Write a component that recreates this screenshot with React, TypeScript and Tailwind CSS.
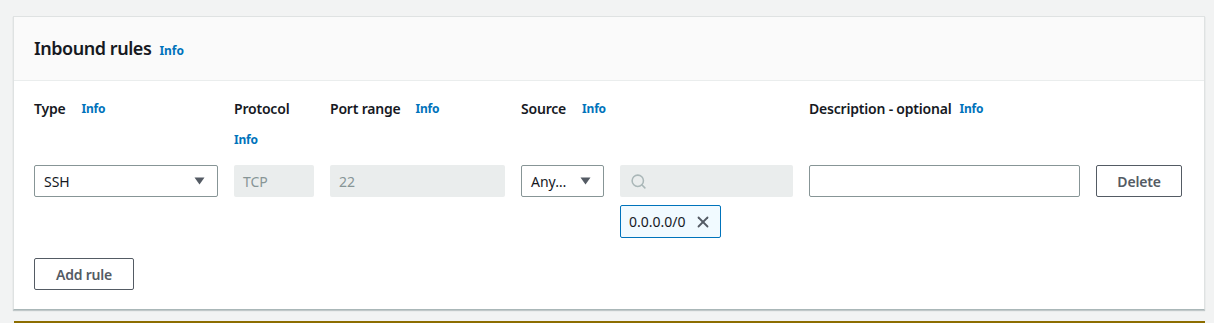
import { Search, X } from "lucide-react";

function InfoLink() {
  return <span className="text-[12px] font-bold text-[#0073bb] leading-[22px]">Info</span>;
}

function Caret() {
  return (
    <svg width="11" height="8" viewBox="0 0 11 8" className="shrink-0">
      <path d="M0.5 0.5h10L5.5 7.5z" fill="#545b64" />
    </svg>
  );
}

const label = "text-[14px] font-[630] tracking-[-0.2px] text-[#16191f] leading-[22px]";
const btn =
  "h-8 border border-[#545b64] rounded-[2px] flex items-center justify-center text-[14px] font-[630] tracking-[-0.2px] text-[#545b64]";

export default function App() {
  return (
    <div
      className="min-h-screen bg-[#f2f3f3] pl-[13px] pr-[9px] pt-4"
      style={{ fontFamily: '"Noto Sans", sans-serif' }}
    >
      <div className="bg-white border border-[#dfe2e2] border-b-[#aab7b8] shadow-[0_1px_1px_0_rgba(0,28,36,0.2)]">
        {/* header */}
        <div className="h-16 bg-[#fafafa] border-b border-[#eaeded] px-5 flex items-center gap-2">
          <h2 className="text-[18px] font-[630] tracking-[-0.45px] text-[#16191f]">Inbound rules</h2>
          <span className="text-[12px] font-bold text-[#0073bb] mt-1">Info</span>
        </div>

        {/* body */}
        <div className="px-5 pt-[17px] pb-[19px]">
          <div className="grid grid-cols-[184px_80px_175px_83px_173px_271px_86px] gap-x-4">
            <div className={`flex flex-wrap gap-x-4 ${label}`}>
              <span>Type</span>
              <InfoLink />
            </div>
            <div className={`flex flex-wrap gap-x-3 gap-y-[9px] ${label}`}>
              <span>Protocol</span>
              <InfoLink />
            </div>
            <div className={`flex flex-wrap gap-x-[15px] ${label}`}>
              <span>Port range</span>
              <InfoLink />
            </div>
            <div className={`col-span-2 flex gap-x-4 ${label}`}>
              <span>Source</span>
              <InfoLink />
            </div>
            <div className={`flex flex-wrap gap-x-2 ${label}`}>
              <span>Description - optional</span>
              <InfoLink />
            </div>
            <div />

            {/* inputs row */}
            <div className="mt-[14px] h-8 border border-[#879596] rounded-[2px] flex items-center justify-between pl-[9px] pr-[12px] text-[14px] text-[#16191f]">
              <span>SSH</span>
              <Caret />
            </div>
            <div className="mt-[14px] h-8 bg-[#eaeded] rounded-[2px] flex items-center pl-[9px] text-[14px] text-[#879596]">
              TCP
            </div>
            <div className="mt-[14px] h-8 bg-[#eaeded] rounded-[2px] flex items-center pl-[9px] text-[14px] text-[#879596]">
              22
            </div>
            <div className="mt-[14px] h-8 border border-[#879596] rounded-[2px] flex items-center justify-between pl-[9px] pr-[12px] text-[14px] text-[#16191f]">
              <span>Any…</span>
              <Caret />
            </div>
            <div className="mt-[14px]">
              <div className="h-8 bg-[#eaeded] rounded-[2px] flex items-center pl-[10px]">
                <Search size={17} strokeWidth={2.2} className="text-[#aab7b8]" />
              </div>
              <div className="mt-2 w-[101px] h-[33px] border border-[#0073bb] rounded-[2px] bg-[#f1faff] flex items-center justify-between pl-[8px] pr-[8px] text-[14px] text-[#16191f]">
                <span>0.0.0.0/0</span>
                <X size={18} strokeWidth={2.4} className="text-[#545b64]" />
              </div>
            </div>
            <div className="mt-[14px] h-8 border border-[#879596] rounded-[2px]" />
            <div className={`mt-[14px] ${btn}`}>Delete</div>
          </div>

          <div className={`mt-5 w-[100px] ${btn}`}>Add rule</div>
        </div>
      </div>
      <div className="mt-[11px] ml-[1px] border-t-2 border-[#8c6d00]" />
    </div>
  );
}
